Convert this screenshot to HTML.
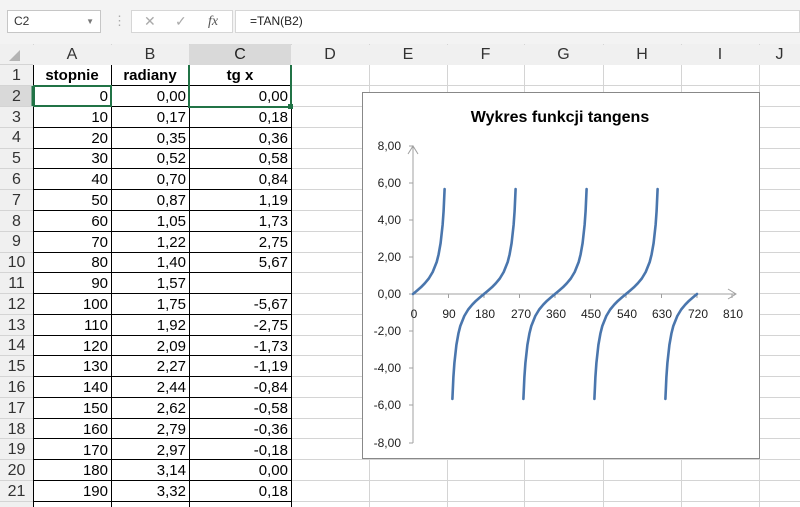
<!DOCTYPE html>
<html><head><meta charset="utf-8"><style>
body{margin:0;width:800px;height:507px;overflow:hidden;background:#fff;font-family:"Liberation Sans",Arial,sans-serif;position:relative}
.abs{position:absolute}
.tb{left:0;top:0;width:800px;height:44px;background:#f3f3f3;border-bottom:1px solid #d0d0d0}
.c{position:absolute;font-size:15px;color:#000;box-sizing:border-box;padding:0 3px;white-space:nowrap;line-height:21px}
.h{position:absolute;font-size:16px;color:#333;text-align:center;box-sizing:border-box;background:#f0f0f0;line-height:20px}
</style></head><body>
<div class="abs tb"></div>
<div class="abs" style="left:7px;top:10px;width:94px;height:23px;background:#fff;border:1px solid #c6c6c6;box-sizing:border-box;font-size:12px;line-height:21px;padding-left:6px;color:#333">C2<span style="position:absolute;right:6px;top:0;font-size:8px;color:#777">▼</span></div>
<div class="abs" style="left:113px;top:13px;color:#aaa;font-size:13px">⋮</div>
<div class="abs" style="left:131px;top:10px;width:102px;height:23px;background:#fff;border:1px solid #d6d6d6;box-sizing:border-box;font-size:14px;color:#aaa;line-height:21px"><span style="position:absolute;left:12px">✕</span><span style="position:absolute;left:43px">✓</span><span style="position:absolute;left:76px;font-style:italic;font-family:'Liberation Serif';color:#555">fx</span></div>
<div class="abs" style="left:235px;top:10px;width:565px;height:23px;background:#fff;border:1px solid #d6d6d6;box-sizing:border-box;font-size:12px;line-height:21px;padding-left:14px;color:#222">=TAN(B2)</div>
<svg class="abs" style="left:0;top:44px" width="800" height="463">
<rect x="0" y="0" width="800" height="20" fill="#f0f0f0"/>
<rect x="0" y="0" width="33" height="463" fill="#f0f0f0"/>
<rect x="189" y="0" width="102" height="20" fill="#d9d9d9"/>
<rect x="0" y="42" width="33" height="21" fill="#d9d9d9"/>
<line x1="189" y1="19.5" x2="291" y2="19.5" stroke="#217346" stroke-width="2"/>
<line x1="32.5" y1="42" x2="32.5" y2="63" stroke="#217346" stroke-width="2"/>
<path d="M20 6 L20 17 L9 17Z" fill="#b4b4b4"/>
<g stroke="#d4d4d4" stroke-width="1">
<line x1="33.5" y1="0" x2="33.5" y2="463"/><line x1="111.5" y1="0" x2="111.5" y2="463"/><line x1="189.5" y1="0" x2="189.5" y2="463"/><line x1="291.5" y1="0" x2="291.5" y2="463"/><line x1="369.5" y1="0" x2="369.5" y2="463"/><line x1="447.5" y1="0" x2="447.5" y2="463"/><line x1="524.5" y1="0" x2="524.5" y2="463"/><line x1="603.5" y1="0" x2="603.5" y2="463"/><line x1="681.5" y1="0" x2="681.5" y2="463"/><line x1="759.5" y1="0" x2="759.5" y2="463"/>
<line x1="0" y1="20.5" x2="800" y2="20.5"/>
</g>
</svg>
<svg class="abs" style="left:0;top:0" width="800" height="507">
<g stroke="#d4d4d4">
<path d="M0 85.5H800M0 106.5H800M0 127.5H800M0 148.5H800M0 168.5H800M0 189.5H800M0 210.5H800M0 231.5H800M0 252.5H800M0 272.5H800M0 293.5H800M0 314.5H800M0 335.5H800M0 355.5H800M0 376.5H800M0 397.5H800M0 418.5H800M0 438.5H800M0 459.5H800M0 480.5H800M0 501.5H800"/>
</g>
<g stroke="#000" stroke-width="1">
<path d="M33.5 64.5H291.5M33.5 85.5H291.5M33.5 106.5H291.5M33.5 127.5H291.5M33.5 148.5H291.5M33.5 168.5H291.5M33.5 189.5H291.5M33.5 210.5H291.5M33.5 231.5H291.5M33.5 252.5H291.5M33.5 272.5H291.5M33.5 293.5H291.5M33.5 314.5H291.5M33.5 335.5H291.5M33.5 355.5H291.5M33.5 376.5H291.5M33.5 397.5H291.5M33.5 418.5H291.5M33.5 438.5H291.5M33.5 459.5H291.5M33.5 480.5H291.5M33.5 501.5H291.5"/>
<path d="M33.5 64V507M111.5 64V507M189.5 64V507M291.5 64V507"/>
</g>
<rect x="34" y="86" width="77" height="20" fill="none" stroke="#217346" stroke-width="2"/>
<rect x="189" y="64" width="102" height="43" fill="none" stroke="#217346" stroke-width="2"/>
<rect x="288" y="104" width="5" height="5" fill="#217346"/>
<rect x="362.5" y="92.5" width="397" height="366" fill="#fff" stroke="#888"/>
<g stroke="#a0a0a0" fill="none">
<line x1="413" y1="146" x2="413" y2="443"/>
<line x1="413" y1="294" x2="736" y2="294"/>
<path d="M408 154 L413 146 L418 154"/>
<path d="M728 289 L736 294 L728 299"/>
<path d="M409 146H413M409 183H413M409 220H413M409 257H413M409 294H413M409 331H413M409 368H413M409 405H413M409 443H413"/>
<path d="M448.5 294V298M484 294V298M519.5 294V298M555 294V298M590.5 294V298M626 294V298M661.5 294V298M697 294V298M732 294V298"/>
</g>
<defs>
<path id="R" d="M0 0 L3.9 -3.3 L7.9 -6.7 L11.8 -10.7 L15.8 -15.5 L19.7 -22 L23.7 -32 L25.6 -39.6 L27.6 -50.9 L29.6 -69 L30.6 -83 L31.6 -104.9"/>
<path id="L" d="M0 0 L-3.9 3.3 L-7.9 6.7 L-11.8 10.7 L-15.8 15.5 L-19.7 22 L-23.7 32 L-25.6 39.6 L-27.6 50.9 L-29.6 69 L-30.6 83 L-31.6 104.9"/>
</defs>
<g stroke="#4a76ad" stroke-width="2.6" fill="none" stroke-linejoin="round" stroke-linecap="round">
<use href="#R" x="413" y="294"/>
<use href="#L" x="484" y="294"/><use href="#R" x="484" y="294"/>
<use href="#L" x="555" y="294"/><use href="#R" x="555" y="294"/>
<use href="#L" x="626" y="294"/><use href="#R" x="626" y="294"/>
<use href="#L" x="697" y="294"/>
</g>
<text x="560" y="122" font-family="Liberation Sans" font-weight="bold" font-size="16" text-anchor="middle">Wykres funkcji tangens</text>
<g font-family="Liberation Sans" font-size="12" fill="#222" text-anchor="end">
<text x="401" y="150">8,00</text><text x="401" y="187">6,00</text><text x="401" y="224">4,00</text><text x="401" y="261">2,00</text><text x="401" y="298">0,00</text><text x="401" y="335">-2,00</text><text x="401" y="372">-4,00</text><text x="401" y="409">-6,00</text><text x="401" y="447">-8,00</text>
</g>
<g font-family="Liberation Sans" font-size="12" fill="#222" text-anchor="middle">
<text x="414" y="318">0</text><text x="449" y="318">90</text><text x="485" y="318">180</text><text x="521" y="318">270</text><text x="556" y="318">360</text><text x="591" y="318">450</text><text x="627" y="318">540</text><text x="662" y="318">630</text><text x="698" y="318">720</text><text x="733" y="318">810</text>
</g>
</svg>
<div class="h" style="left:33px;top:45px;width:78px">A</div>
<div class="h" style="left:111px;top:45px;width:78px">B</div>
<div class="h" style="left:189px;top:45px;width:102px;background:#d9d9d9;color:#222">C</div>
<div class="h" style="left:291px;top:45px;width:78px">D</div>
<div class="h" style="left:369px;top:45px;width:78px">E</div>
<div class="h" style="left:447px;top:45px;width:77px">F</div>
<div class="h" style="left:524px;top:45px;width:79px">G</div>
<div class="h" style="left:603px;top:45px;width:78px">H</div>
<div class="h" style="left:681px;top:45px;width:78px">I</div>
<div class="h" style="left:759px;top:45px;width:41px">J</div>
<div class="c" style="left:33px;top:65px;width:78px;text-align:center;font-weight:bold">stopnie</div>
<div class="c" style="left:111px;top:65px;width:78px;text-align:center;font-weight:bold">radiany</div>
<div class="c" style="left:189px;top:65px;width:102px;text-align:center;font-weight:bold">tg x</div>
<div style="position:absolute;left:0;top:66px;width:33px;font-size:16px;color:#333;text-align:center;line-height:20.8px">1<br>2<br>3<br>4<br>5<br>6<br>7<br>8<br>9<br>10<br>11<br>12<br>13<br>14<br>15<br>16<br>17<br>18<br>19<br>20<br>21</div>
<div style="position:absolute;left:33px;top:87px;width:78px;font-size:15px;text-align:right;padding-right:3px;box-sizing:border-box;line-height:20.8px">0<br>10<br>20<br>30<br>40<br>50<br>60<br>70<br>80<br>90<br>100<br>110<br>120<br>130<br>140<br>150<br>160<br>170<br>180<br>190</div>
<div style="position:absolute;left:111px;top:87px;width:78px;font-size:15px;text-align:right;padding-right:3px;box-sizing:border-box;line-height:20.8px">0,00<br>0,17<br>0,35<br>0,52<br>0,70<br>0,87<br>1,05<br>1,22<br>1,40<br>1,57<br>1,75<br>1,92<br>2,09<br>2,27<br>2,44<br>2,62<br>2,79<br>2,97<br>3,14<br>3,32</div>
<div style="position:absolute;left:189px;top:87px;width:102px;font-size:15px;text-align:right;padding-right:3px;box-sizing:border-box;line-height:20.8px">0,00<br>0,18<br>0,36<br>0,58<br>0,84<br>1,19<br>1,73<br>2,75<br>5,67<br>&nbsp;<br>-5,67<br>-2,75<br>-1,73<br>-1,19<br>-0,84<br>-0,58<br>-0,36<br>-0,18<br>0,00<br>0,18</div>
</body></html>
